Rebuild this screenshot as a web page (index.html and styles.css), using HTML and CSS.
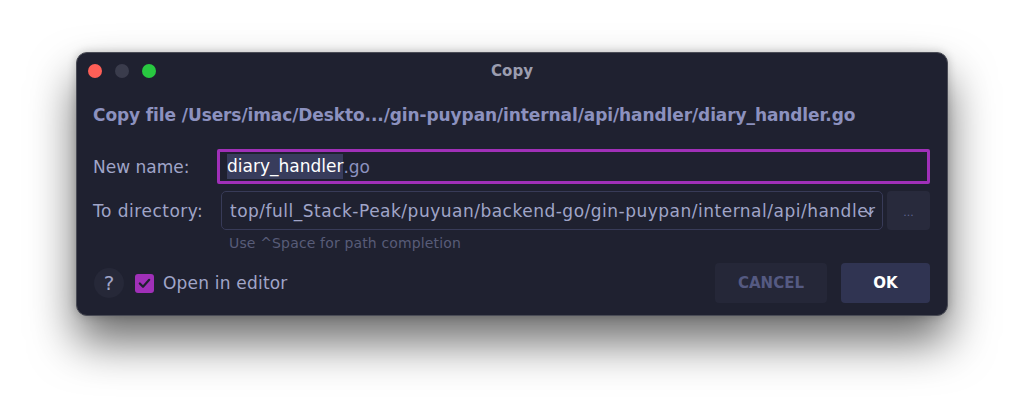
FILE: index.html
```html
<!DOCTYPE html>
<html>
<head>
<meta charset="utf-8">
<link rel="stylesheet" href="styles.css">
</head>
<body>
<div class="stage">
  <div class="window">
    <div class="titlebar">
      <div class="lights">
        <span class="light red"></span>
        <span class="light gray"></span>
        <span class="light green"></span>
      </div>
      <div class="title">Copy</div>
    </div>
    <div class="content">
      <div class="heading">Copy file /Users/imac/Deskto.../gin-puypan/internal/api/handler/diary_handler.go</div>
      <div class="form">
        <label class="label">New name:</label>
        <div class="input"><span class="sel">diary_handler</span><span class="ext">.go</span></div>
        <label class="label label-dir">To directory:</label>
        <div class="dirrow">
          <div class="combo">
            <span class="combo-text">top/full_Stack-Peak/puyuan/backend-go/gin-puypan/internal/api/handler</span>
            <svg class="chev" width="9" height="6" viewBox="0 0 9 6"><path d="M1.2 1.2 L4.5 4.5 L7.8 1.2" fill="none" stroke="#a0a5c8" stroke-width="1.6" stroke-linecap="round" stroke-linejoin="round"/></svg>
          </div>
          <div class="browse">...</div>
        </div>
        <div></div>
        <div class="hint">Use ^Space for path completion</div>
      </div>
      <div class="footer">
        <div class="help">?</div>
        <div class="check">
          <svg width="13" height="11" viewBox="0 0 13 11"><path d="M1.8 5.5 L5 8.8 L11.2 1.8" fill="none" stroke="#1f2130" stroke-width="2.2" stroke-linecap="round" stroke-linejoin="round"/></svg>
        </div>
        <span class="check-label">Open in editor</span>
        <div class="spacer"></div>
        <button class="btn cancel">CANCEL</button>
        <button class="btn ok">OK</button>
      </div>
    </div>
  </div>
</div>
</body>
</html>
```
FILE: styles.css
```css
html, body {
  margin: 0;
  padding: 0;
  background: #ffffff;
}
body {
  font-family: "DejaVu Sans", "Open Sans", sans-serif;
  width: 1024px;
  height: 416px;
  overflow: hidden;
}
.stage {
  padding: 52px 0 0 76px;
}
.window {
  width: 872px;
  height: 264px;
  box-sizing: border-box;
  background: #1f2130;
  border: 1px solid #4a4c56;
  border-radius: 11px;
  box-shadow: 0 26px 46px rgba(0, 0, 0, 0.58), 0 0 10px rgba(0,0,0,0.2);
  position: relative;
  overflow: hidden;
}
.titlebar {
  height: 36px;
  display: flex;
  align-items: center;
  position: relative;
}
.lights {
  display: flex;
  gap: 13px;
  padding-left: 11px;
}
.light {
  width: 14px;
  height: 14px;
  border-radius: 50%;
  display: block;
}
.red { background: #fe5f57; }
.gray { background: #3a3c4c; }
.green { background: #28c840; }
.title {
  position: absolute;
  left: 0;
  right: 0;
  top: 0;
  line-height: 36px;
  text-align: center;
  font-weight: bold;
  font-size: 15px;
  color: #9b9daf;
}
.content {
  padding: 0 17px 0 16px;
}
.heading {
  margin-top: 16px;
  font-weight: bold;
  font-size: 17px;
  line-height: 20px;
  color: #8c91bf;
  white-space: nowrap;
  letter-spacing: -0.1px;
}
.form {
  margin-top: 24px;
  display: grid;
  grid-template-columns: 124px 1fr;
  grid-template-rows: 35px 39px auto;
  row-gap: 7px;
  align-items: center;
}
.label {
  font-size: 17px;
  color: #a0a5c8;
  white-space: nowrap;
}
.label-dir {
  letter-spacing: 0.5px;
}
.input {
  height: 35px;
  box-sizing: border-box;
  border: 3px solid #a030b8;
  border-radius: 2px;
  display: flex;
  align-items: center;
  padding-left: 7px;
  font-size: 17px;
}
.sel {
  background: #383c5c;
  color: #ffffff;
  padding: 2px 0 3px;
}
.ext {
  color: #8c91bf;
}
.dirrow {
  display: flex;
  gap: 4px;
  height: 39px;
  padding-left: 4px;
}
.combo {
  flex: 1;
  box-sizing: border-box;
  border: 1px solid #383b58;
  border-radius: 5px;
  display: flex;
  align-items: center;
  padding-left: 8px;
  position: relative;
  overflow: hidden;
}
.combo-text {
  font-size: 17px;
  color: #a0a5c8;
  white-space: nowrap;
  letter-spacing: 0.5px;
}
.chev {
  position: absolute;
  right: 8px;
  top: 18px;
}
.browse {
  width: 43px;
  background: #282a3c;
  border-radius: 4px;
  color: #5e6390;
  font-size: 11px;
  display: flex;
  align-items: center;
  justify-content: center;
  padding-top: 4px;
  box-sizing: border-box;
}
.hint {
  padding-left: 12px;
  font-size: 14px;
  color: #585c78;
  line-height: 16px;
  margin-top: -2px;
  letter-spacing: 0.15px;
}
.footer {
  margin-top: 12px;
  display: flex;
  align-items: center;
  height: 40px;
}
.help {
  width: 30px;
  height: 30px;
  border-radius: 50%;
  background: #262838;
  color: #a0a5c8;
  font-size: 20px;
  display: flex;
  align-items: center;
  justify-content: center;
  margin-left: 1px;
}
.check {
  margin-left: 11px;
  width: 19px;
  height: 19px;
  background: #a030b8;
  border-radius: 3px;
  display: flex;
  align-items: center;
  justify-content: center;
}
.check-label {
  margin-left: 9px;
  font-size: 17px;
  color: #a0a5c8;
  letter-spacing: 0.2px;
}
.spacer { flex: 1; }
.btn {
  height: 40px;
  border: none;
  border-radius: 4px;
  font-family: "DejaVu Sans", "Open Sans", sans-serif;
  font-weight: bold;
  font-size: 15px;
  padding: 0;
}
.cancel {
  width: 112px;
  background: #252738;
  color: #555a82;
}
.ok {
  width: 89px;
  margin-left: 14px;
  background: #303452;
  color: #ffffff;
}
```
